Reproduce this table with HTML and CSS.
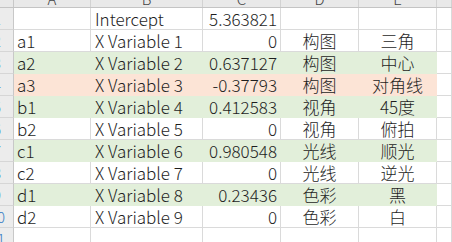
FILE: index.html
```html
<!DOCTYPE html>
<html>
<head>
<meta charset="utf-8">
<link rel="stylesheet" href="styles.css">
</head>
<body>
<div class="sheet">
  <div class="hdr">
    <div class="rh"></div>
    <div class="h ca"><span>A</span></div>
    <div class="h cb"><span>B</span></div>
    <div class="h cc"><span>C</span></div>
    <div class="h cd"><span>D</span></div>
    <div class="h ce"><span>E</span></div>
    <div class="h cf"></div>
  </div>
  <div class="row">
    <div class="rh"><div class="rn">1</div></div>
    <div class="c ca"></div><div class="c cb">Intercept</div><div class="c cc num">5.363821</div><div class="c cd"></div><div class="c ce"></div><div class="c cf"></div>
  </div>
  <div class="row">
    <div class="rh"><div class="rn">2</div></div>
    <div class="c ca">a1</div><div class="c cb">X Variable 1</div><div class="c cc num">0</div><div class="c cd">构图</div><div class="c ce">三角</div><div class="c cf"></div>
  </div>
  <div class="row green">
    <div class="rh"><div class="rn">3</div></div>
    <div class="c ca">a2</div><div class="c cb">X Variable 2</div><div class="c cc num">0.637127</div><div class="c cd">构图</div><div class="c ce">中心</div><div class="c cf"></div>
  </div>
  <div class="row red">
    <div class="rh"><div class="rn">4</div></div>
    <div class="c ca">a3</div><div class="c cb">X Variable 3</div><div class="c cc num">-0.37793</div><div class="c cd">构图</div><div class="c ce">对角线</div><div class="c cf"></div>
  </div>
  <div class="row green">
    <div class="rh"><div class="rn">5</div></div>
    <div class="c ca">b1</div><div class="c cb">X Variable 4</div><div class="c cc num">0.412583</div><div class="c cd">视角</div><div class="c ce">45度</div><div class="c cf"></div>
  </div>
  <div class="row">
    <div class="rh"><div class="rn">6</div></div>
    <div class="c ca">b2</div><div class="c cb">X Variable 5</div><div class="c cc num">0</div><div class="c cd">视角</div><div class="c ce">俯拍</div><div class="c cf"></div>
  </div>
  <div class="row green">
    <div class="rh"><div class="rn">7</div></div>
    <div class="c ca">c1</div><div class="c cb">X Variable 6</div><div class="c cc num">0.980548</div><div class="c cd">光线</div><div class="c ce">顺光</div><div class="c cf"></div>
  </div>
  <div class="row">
    <div class="rh"><div class="rn">8</div></div>
    <div class="c ca">c2</div><div class="c cb">X Variable 7</div><div class="c cc num">0</div><div class="c cd">光线</div><div class="c ce">逆光</div><div class="c cf"></div>
  </div>
  <div class="row green">
    <div class="rh"><div class="rn">9</div></div>
    <div class="c ca">d1</div><div class="c cb">X Variable 8</div><div class="c cc num">0.23436</div><div class="c cd">色彩</div><div class="c ce">黑</div><div class="c cf"></div>
  </div>
  <div class="row">
    <div class="rh"><div class="rn">10</div></div>
    <div class="c ca">d2</div><div class="c cb">X Variable 9</div><div class="c cc num">0</div><div class="c cd">色彩</div><div class="c ce">白</div><div class="c cf"></div>
  </div>
  <div class="row">
    <div class="rh"><div class="rn">11</div></div>
    <div class="c ca"></div><div class="c cb"></div><div class="c cc"></div><div class="c cd"></div><div class="c ce"></div><div class="c cf"></div>
  </div>
</div>
</body>
</html>
```

FILE: styles.css
```css
html, body {
  margin: 0;
  padding: 0;
  background: #ffffff;
  overflow: hidden;
}
.sheet {
  width: 452px;
  height: 242px;
  overflow: hidden;
  display: flex;
  flex-direction: column;
  font-family: "Noto Sans CJK SC", sans-serif;
  font-size: 17px;
  font-weight: 300;
  color: #1e1e1e;
}
.hdr {
  display: flex;
  flex: none;
  height: 8px;
  box-sizing: border-box;
  background: #e9e9e9;
  border-bottom: 1px solid #c4c4c4;
  overflow: hidden;
}
.hdr .h {
  box-sizing: border-box;
  border-right: 1px solid #d2d2d2;
  display: flex;
  justify-content: center;
  align-items: flex-end;
  padding-bottom: 1px;
  font-size: 15px;
  line-height: 1;
  color: #444444;
  overflow: visible;
}
.hdr .rh {
  background: #e9e9e9;
  border-bottom: none;
}
.ca { width: 77px; }
.cb { width: 112px; }
.cc { width: 78px; }
.cd { width: 78px; }
.ce { width: 78px; }
.cf { flex: 1; }
.row {
  display: flex;
  flex: none;
  height: 22px;
}
.rh {
  flex: none;
  width: 14px;
  box-sizing: border-box;
  background: #ececec;
  border-right: 1px solid #c8c8c8;
  border-bottom: 1px solid #d6d6d6;
  overflow: hidden;
}
.rn {
  width: 32px;
  margin-left: -19px;
  text-align: center;
  font-size: 15px;
  line-height: 21px;
  color: #3b7fc4;
}
.c {
  flex: none;
  box-sizing: border-box;
  height: 22px;
  padding-top: 1px;
  border-right: 1px solid #dadada;
  border-bottom: 1px solid #dadada;
  line-height: 20px;
  white-space: nowrap;
  overflow: hidden;
  text-align: center;
}
.c.cf { flex: 1; }
.c.ca, .c.cb {
  text-align: left;
  padding-left: 3px;
}
.c.cb { padding-left: 4px; }
.c.num {
  text-align: right;
  padding-right: 3px;
}
.green .ca, .green .cb, .green .cc, .green .cd, .green .ce {
  background: #e2efda;
  border-color: #e2efda;
}
.red .ca, .red .cb, .red .cc, .red .cd, .red .ce {
  background: #fce4d6;
  border-color: #fce4d6;
}
```
